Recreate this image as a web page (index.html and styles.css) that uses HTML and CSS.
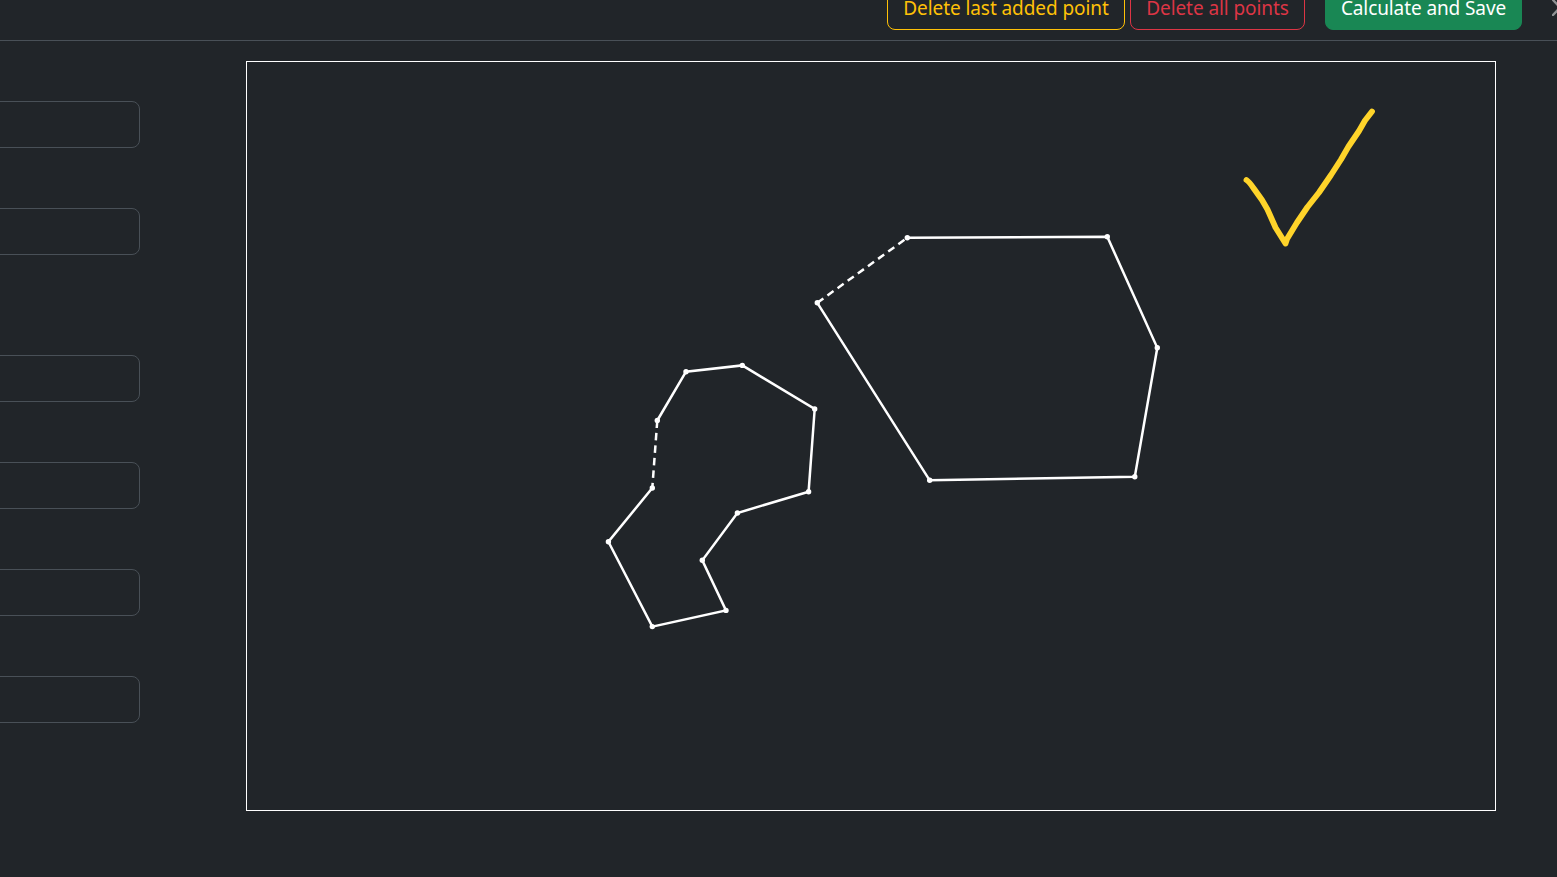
FILE: index.html
```html
<!DOCTYPE html>
<html lang="en">
<head>
<meta charset="utf-8">
<title>Area calculator</title>
<link rel="stylesheet" href="styles.css">
</head>
<body>
<header class="toolbar">
  <button class="btn btn-warning"><span>Delete last added point</span></button>
  <button class="btn btn-danger"><span>Delete all points</span></button>
  <button class="btn btn-success"><span>Calculate and Save</span></button>
  <svg class="close" viewBox="0 0 16 16"><path d="M1 0L15 15M15 0L1 15"/></svg>
</header>
<main class="content">
  <form class="fields">
    <input class="field" type="text">
    <input class="field field-group-end" type="text">
    <input class="field" type="text">
    <input class="field" type="text">
    <input class="field" type="text">
    <input class="field" type="text">
  </form>
  <div class="board">
    <svg class="drawing" viewBox="247 62 1248 748">
      <g class="edges">
        <polyline points="907.3,237.8 1107.3,236.8 1157.3,347.8 1134.8,476.7 929.7,480.3 817.3,302.8"/>
        <line class="dashed" x1="817.3" y1="302.8" x2="907.3" y2="237.8"/>
        <polyline points="652.3,488 608.4,541.7 652.3,626.6 726,610.4 702.3,560.3 737.4,513 808.6,491.7 814.7,409 742.3,365.4 686,371.7 657.3,420.5"/>
        <line class="dashed" x1="657.3" y1="420.5" x2="652.3" y2="488"/>
      </g>
      <g class="points">
        <circle cx="907.3" cy="237.8" r="2.7"/><circle cx="1107.3" cy="236.8" r="2.7"/>
        <circle cx="1157.3" cy="347.8" r="2.7"/><circle cx="1134.8" cy="476.7" r="2.7"/>
        <circle cx="929.7" cy="480.3" r="2.7"/><circle cx="817.3" cy="302.8" r="2.7"/>
        <circle cx="652.3" cy="488" r="2.7"/><circle cx="608.4" cy="541.7" r="2.7"/>
        <circle cx="652.3" cy="626.6" r="2.7"/><circle cx="726" cy="610.4" r="2.7"/>
        <circle cx="702.3" cy="560.3" r="2.7"/><circle cx="737.4" cy="513" r="2.7"/>
        <circle cx="808.6" cy="491.7" r="2.7"/><circle cx="814.7" cy="409" r="2.7"/>
        <circle cx="742.3" cy="365.4" r="2.7"/><circle cx="686" cy="371.7" r="2.7"/>
        <circle cx="657.3" cy="420.5" r="2.7"/>
      </g>
      <path class="check" d="M1246.5 180C1250 182.5 1252 186 1254.5 189.500L1262 200L1267.500 209.500L1275.500 227.500L1285.500 243.500L1287 239L1297 222.500L1307.500 207L1319 192.500L1331 175L1341 159.500L1348.500 146.500L1359 131L1365 120.500L1372 111.500"/>
    </svg>
  </div>
</main>
</body>
</html>
```
FILE: styles.css
```css
* { box-sizing: border-box; }

body {
  margin: 0;
  height: 877px;
  overflow: hidden;
  background: #212529;
  font-family: "Noto Sans", sans-serif;
}

.toolbar {
  display: flex;
  justify-content: flex-end;
  align-items: flex-end;
  height: 41px;
  padding-bottom: 10px;
  border-bottom: 1px solid #495057;
  overflow: hidden;
}

.btn {
  flex: none;
  height: 48px;
  padding: 4px 0 0;
  border: 1px solid;
  border-radius: 8px;
  background: transparent;
  font-family: inherit;
  font-size: 19px;
  line-height: 24px;
  white-space: nowrap;
}

.btn-warning {
  width: 238px;
  margin-right: 5px;
  color: #ffc107;
  letter-spacing: -0.08px;
}

.btn-danger {
  width: 175px;
  margin-right: 20px;
  color: #dc3545;
  letter-spacing: -0.08px;
}

.btn-success {
  width: 197px;
  margin-right: 30px;
  border-color: #198754;
  background: #198754;
  color: #fff;
  letter-spacing: -0.1px;
}

.close {
  flex: none;
  width: 16px;
  height: 16px;
  margin: 0 -11px 14px 0;
  fill: none;
  stroke: #909294;
  stroke-width: 2.4;
  stroke-linecap: round;
}

.content {
  display: flex;
  gap: 106px;
}

.fields {
  display: flex;
  flex-direction: column;
  gap: 60px;
  width: 140px;
  padding-top: 60px;
}

.field {
  width: 160px;
  height: 47px;
  margin: 0 0 0 -20px;
  padding: 8px 16px;
  border: 1px solid #495057;
  border-radius: 8px;
  background: #212529;
}

.field-group-end { margin-bottom: 40px; }

.board {
  width: 1250px;
  height: 750px;
  margin-top: 20px;
  border: 1px solid #fff;
}

.drawing { display: block; width: 1248px; height: 748px; }

.edges {
  fill: none;
  stroke: #fff;
  stroke-width: 2.5;
}

.dashed { stroke-dasharray: 7.5 5; }

.points { fill: #fff; }

.check {
  fill: none;
  stroke: #ffd42a;
  stroke-width: 5.8;
  stroke-linecap: round;
  stroke-linejoin: round;
}
```
